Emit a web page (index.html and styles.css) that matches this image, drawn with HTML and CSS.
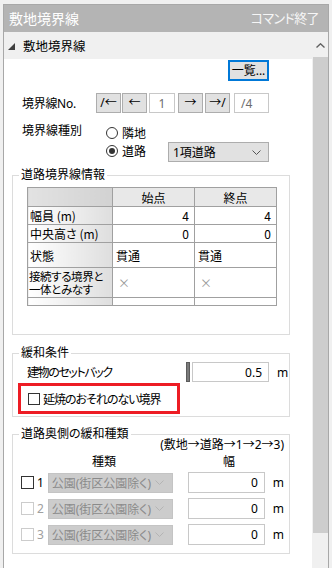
FILE: index.html
```html
<!DOCTYPE html>
<html lang="ja">
<head>
<meta charset="utf-8">
<link rel="stylesheet" href="styles.css">
</head>
<body>
<div class="window">
  <div class="titlebar"><span class="title">敷地境界線</span><span class="close">コマンド終了</span></div>
  <div class="body">
    <div class="main">
      <div class="section-head">
        <svg class="tri" width="7" height="7" viewBox="0 0 7 7"><polygon points="7,0 7,7 0,7" fill="#404040"/></svg>
        <span>敷地境界線</span>
      </div>
      <div class="content">
        <div class="row-list"><button class="btn-list">一覧...</button></div>

        <div class="row-no">
          <span class="lbl">境界線No.</span>
          <button class="nb">/←</button>
          <button class="nb g1">←</button>
          <span class="field num g2">1</span>
          <button class="nb g3">→</button>
          <button class="nb g2">→/</button>
          <span class="field total">/4</span>
        </div>

        <div class="row-kind">
          <span class="lbl">境界線種別</span>
          <div class="radios">
            <div class="radio"><span class="circle"></span><span>隣地</span></div>
            <div class="radio"><span class="circle on"></span><span>道路</span></div>
          </div>
          <div class="select road"><span>1項道路</span>
            <svg class="chev" width="9" height="5" viewBox="0 0 9 5"><polyline points="0.5,0.5 4.5,4.5 8.5,0.5" fill="none" stroke="#555" stroke-width="1"/></svg>
          </div>
        </div>

        <fieldset class="group g-road">
          <legend>道路境界線情報</legend>
          <table class="grid">
            <colgroup><col class="c1"><col class="c2"><col class="c3"></colgroup>
            <tr class="h"><th class="corner"></th><th>始点</th><th>終点</th></tr>
            <tr class="r18"><th class="rh">幅員 (m)</th><td class="n">4</td><td class="n">4</td></tr>
            <tr class="r18"><th class="rh">中央高さ (m)</th><td class="n">0</td><td class="n">0</td></tr>
            <tr class="r25"><th class="rh">状態</th><td>貫通</td><td>貫通</td></tr>
            <tr class="r30"><th class="rh two">接続する境界と<br>一体とみなす</th><td class="x">×</td><td class="x">×</td></tr>
            <tr class="r8"><th class="rh"></th><td></td><td></td></tr>
          </table>
        </fieldset>

        <fieldset class="group g-relax">
          <legend>緩和条件</legend>
          <div class="setback">
            <span class="sb-lbl">建物のセットバック</span>
            <span class="knob"></span>
            <span class="field val">0.5</span>
            <span class="unit">m</span>
          </div>
          <div class="redbox">
            <span class="check"></span><span class="cb-lbl">延焼のおそれのない境界</span>
          </div>
        </fieldset>

        <fieldset class="group g-back">
          <legend>道路奥側の緩和種類</legend>
          <div class="note">(敷地→道路→1→2→3)</div>
          <div class="cols"><span class="h-kind">種類</span><span class="h-width">幅</span></div>
          <div class="brow">
            <span class="check"></span><span class="idx">1</span>
            <div class="select dis"><span>公園(街区公園除く)</span>
              <svg class="chev" width="9" height="5" viewBox="0 0 9 5"><polyline points="0.5,0.5 4.5,4.5 8.5,0.5" fill="none" stroke="#b4b4b4" stroke-width="1"/></svg>
            </div>
            <span class="field val">0</span><span class="unit">m</span>
          </div>
          <div class="brow">
            <span class="check off"></span><span class="idx off">2</span>
            <div class="select dis"><span>公園(街区公園除く)</span>
              <svg class="chev" width="9" height="5" viewBox="0 0 9 5"><polyline points="0.5,0.5 4.5,4.5 8.5,0.5" fill="none" stroke="#b4b4b4" stroke-width="1"/></svg>
            </div>
            <span class="field val">0</span><span class="unit">m</span>
          </div>
          <div class="brow">
            <span class="check off"></span><span class="idx off">3</span>
            <div class="select dis"><span>公園(街区公園除く)</span>
              <svg class="chev" width="9" height="5" viewBox="0 0 9 5"><polyline points="0.5,0.5 4.5,4.5 8.5,0.5" fill="none" stroke="#b4b4b4" stroke-width="1"/></svg>
            </div>
            <span class="field val">0</span><span class="unit">m</span>
          </div>
        </fieldset>
      </div>
    </div>
    <div class="scrollbar">
      <div class="sb-up">
        <svg width="9" height="5" viewBox="0 0 9 5"><polyline points="0.5,4.5 4.5,0.8 8.5,4.5" fill="none" stroke="#606060" stroke-width="1.4"/></svg>
      </div>
      <div class="thumb"></div>
    </div>
  </div>
</div>
</body>
</html>
```

FILE: styles.css
```css
* { box-sizing: border-box; }
html, body { margin: 0; padding: 0; }
body {
  width: 332px;
  height: 568px;
  overflow: hidden;
  background: #f0f0f0;
  font-family: "Noto Sans", "Noto Sans CJK JP", sans-serif;
  font-size: 12px;
  color: #000;
  font-feature-settings: "palt";
  white-space: nowrap;
}
.window {
  margin: 4px 3px 0 3px;
  height: 564px;
  border: 1px solid #a8a8a8;
  border-bottom: none;
  display: flex;
  flex-direction: column;
}
.titlebar {
  height: 27px;
  flex: none;
  background: #b4b4b4;
  color: #fff;
  display: flex;
  align-items: center;
  justify-content: space-between;
  padding: 0 9px 0 5px;
  font-size: 14px;
  line-height: 1;
}
.titlebar .close { font-size: 13px; letter-spacing: -0.6px; color: #f6f6f6; }
.body { flex: 1; display: flex; min-height: 0; }
.main { width: 308px; flex: none; display: flex; flex-direction: column; background: #fff; }
.section-head {
  height: 27px;
  flex: none;
  background: #f0f0f0;
  display: flex;
  align-items: center;
  padding-left: 4px;
  font-size: 12.5px;
}
.tri { margin-right: 8px; margin-top: 1px; }
.content { flex: 1; padding-top: 1px; }

.row-list { display: flex; justify-content: flex-end; padding-right: 43px; }
button { font-family: inherit; padding: 0; margin: 0; color: #000; }
.btn-list {
  width: 41px; height: 21px;
  border: 2px solid #0078d7;
  background: #e1e1e1;
  font-size: 12px;
  line-height: 1;
}

.row-no { display: flex; align-items: center; margin-top: 12px; padding-left: 18px; height: 20px; }
.lbl { width: 74px; flex: none; font-size: 12px; }
.row-no .lbl { letter-spacing: -0.3px; }
.nb {
  width: 25px; height: 20px; flex: none;
  background: #e1e1e1;
  border: 1px solid #adadad;
  font-size: 12px;
  line-height: 1;
}
.g1 { margin-left: 1px; }
.g2 { margin-left: 2px; }
.g3 { margin-left: 3px; }
.field {
  height: 20px;
  flex: none;
  background: #fff;
  border: 1px solid #c8c8c8;
  display: flex;
  align-items: center;
}
.num { width: 26px; justify-content: center; color: #6d6d6d; }
.total { width: 35px; margin-left: 4px; padding-left: 6px; color: #6d6d6d; }

.row-kind { display: flex; margin-top: 11px; padding-left: 18px; }
.row-kind .lbl { width: 84px; line-height: 14px; }
.radios { width: 62px; flex: none; }
.radio { height: 18px; display: flex; align-items: center; font-size: 12px; }
.circle {
  width: 12px; height: 12px;
  border: 1px solid #333;
  border-radius: 50%;
  margin-right: 4px;
  position: relative;
  background: #fff;
}
.circle.on::after {
  content: "";
  position: absolute;
  left: 2px; top: 2px;
  width: 6px; height: 6px;
  border-radius: 50%;
  background: #333;
}
.select {
  display: flex;
  align-items: center;
  justify-content: space-between;
  height: 20px;
  overflow: hidden;
}
.select.road {
  width: 101px;
  margin-top: 18px;
  background: #e1e1e1;
  border: 1px solid #adadad;
  padding: 0 7px 0 4px;
  font-size: 12px;
}

.group {
  margin: 0 22px 0 8px;
  border: 1px solid #dcdcdc;
  padding: 0;
  min-width: 0;
}
.group legend {
  padding: 0 2px;
  margin-left: 6px;
  line-height: 14px;
  font-size: 12px;
}
.g-road { margin-top: 6px; padding-bottom: 28px; }
.grid {
  margin: 5px 0 0 14px;
  width: 249px;
  border-collapse: collapse;
  table-layout: fixed;
  font-size: 12px;
  font-family: "Noto Sans CJK JP", sans-serif;
}
.c1 { width: 85px; }
.c2 { width: 82px; }
.c3 { width: 82px; }
.grid th, .grid td {
  border: 1px solid #a0a0a0;
  padding: 0 3px;
  font-weight: normal;
  line-height: 13px;
  white-space: nowrap;
  overflow: hidden;
}
.grid tr.h th { height: 19px; background: #e8e8e8; text-align: center; }
.grid tr.h th.corner { background: linear-gradient(to right, #e2e2e2, #d2d2d2); }
.grid th.rh { text-align: left; background: linear-gradient(to right, #ffffff, #dedede); padding-left: 2px; }
.grid th.two { letter-spacing: -0.4px; font-size: 11.5px; line-height: 13px; padding-left: 1px; }
.grid tr.r18 > * { height: 18px; }
.grid tr.r25 > * { height: 25px; }
.grid tr.r30 > * { height: 30px; }
.grid tr.r8 > * { height: 8px; }
.grid td.n { text-align: right; padding-right: 5px; }
.grid td.x { color: #9a9a9a; padding-left: 5px; }

.g-relax { margin-top: 11px; padding-bottom: 2px; }
.setback { display: flex; align-items: center; margin-top: 2px; padding-left: 14px; height: 20px; }
.sb-lbl { width: 159px; flex: none; letter-spacing: -1.4px; }
.knob { width: 4px; height: 20px; background: #7a7a7a; border: 1px solid #5c5c5c; flex: none; }
.field.val { width: 77px; justify-content: flex-end; padding-right: 6px; margin-left: 2px; color: #000; font-size: 12px; }
.unit { margin-left: 8px; font-size: 12px; }
.redbox {
  margin: 1px 0 0 5px;
  width: 162px;
  height: 31px;
  border: 3px solid #ed1c24;
  display: flex;
  align-items: center;
  padding-left: 7px;
}
.check {
  width: 12px; height: 12px; flex: none;
  border: 1px solid #333;
  background: #fff;
}
.check.off { border-color: #cccccc; }
.cb-lbl { margin-left: 3px; font-size: 12px; letter-spacing: -1px; }

.g-back { margin-top: 10px; padding: 0 5px 8px 0; }
.note { text-align: right; margin-top: -3px; line-height: 14px; font-size: 12px; }
.cols { display: flex; margin-top: 3px; line-height: 14px; font-size: 12px; }
.h-kind { margin-left: 79px; width: 24px; }
.h-width { margin-left: 107px; }
.brow { display: flex; align-items: center; height: 21px; margin-top: 5px; }
.cols + .brow { margin-top: 3px; }
.brow .check { width: 13px; height: 13px; margin-left: 8px; }
.idx { width: 11px; margin-left: 3px; font-size: 12px; }
.idx.off { color: #a0a0a0; }
.select.dis {
  width: 129px;
  background: #cccccc;
  border: 1px solid #c4c4c4;
  color: #8a8a8a;
  padding: 0 8px 0 3px;
  font-size: 12px;
}
.brow .field.val { margin-left: 15px; height: 21px; }

.scrollbar { width: 16px; flex: none; background: #f0f0f0; display: flex; flex-direction: column; align-items: center; }
.sb-up { height: 25px; width: 16px; display: flex; align-items: center; justify-content: center; padding-top: 1px; }
.thumb { width: 15px; height: 476px; background: #cdcdcd; }
```
